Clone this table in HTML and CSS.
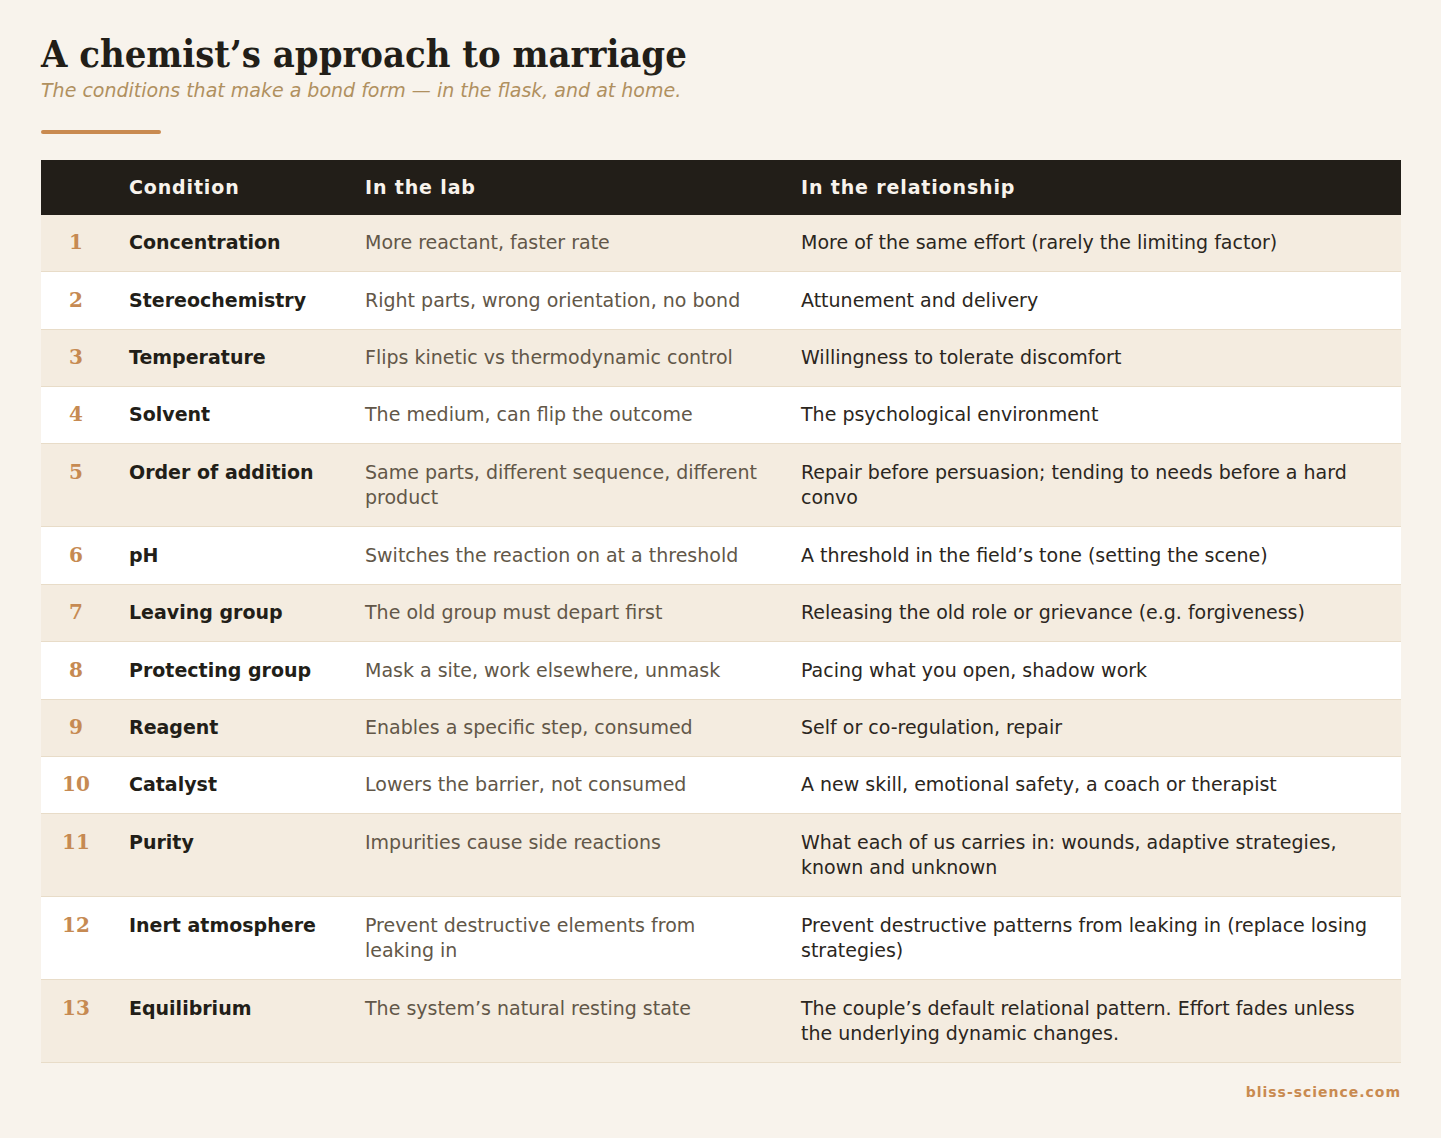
FILE: index.html
```html
<!DOCTYPE html>
<html lang="en">
<head>
<meta charset="utf-8">
<title>A chemist’s approach to marriage</title>
<link rel="stylesheet" href="styles.css">
</head>
<body>
<main class="page">
  <header class="intro">
    <h1 class="title">A chemist’s approach to marriage</h1>
    <p class="subtitle">The conditions that make a bond form — in the flask, and at home.</p>
    <div class="rule"></div>
  </header>
  <table class="grid">
    <colgroup>
      <col class="c-num"><col class="c-cond"><col class="c-lab"><col class="c-rel">
    </colgroup>
    <thead>
      <tr><th></th><th>Condition</th><th>In the lab</th><th>In the relationship</th></tr>
    </thead>
    <tbody>
      <tr><td class="num">1</td><td class="cond">Concentration</td><td class="lab">More reactant, faster rate</td><td class="rel">More of the same effort (rarely the limiting factor)</td></tr>
      <tr><td class="num">2</td><td class="cond">Stereochemistry</td><td class="lab">Right parts, wrong orientation, no bond</td><td class="rel">Attunement and delivery</td></tr>
      <tr><td class="num">3</td><td class="cond">Temperature</td><td class="lab">Flips kinetic vs thermodynamic control</td><td class="rel">Willingness to tolerate discomfort</td></tr>
      <tr><td class="num">4</td><td class="cond">Solvent</td><td class="lab">The medium, can flip the outcome</td><td class="rel">The psychological environment</td></tr>
      <tr><td class="num">5</td><td class="cond">Order of addition</td><td class="lab">Same parts, different sequence, different product</td><td class="rel">Repair before persuasion; tending to needs before a hard convo</td></tr>
      <tr><td class="num">6</td><td class="cond">pH</td><td class="lab">Switches the reaction on at a threshold</td><td class="rel">A threshold in the field’s tone (setting the scene)</td></tr>
      <tr><td class="num">7</td><td class="cond">Leaving group</td><td class="lab">The old group must depart first</td><td class="rel">Releasing the old role or grievance (e.g. forgiveness)</td></tr>
      <tr><td class="num">8</td><td class="cond">Protecting group</td><td class="lab">Mask a site, work elsewhere, unmask</td><td class="rel">Pacing what you open, shadow work</td></tr>
      <tr><td class="num">9</td><td class="cond">Reagent</td><td class="lab">Enables a specific step, consumed</td><td class="rel">Self or co-regulation, repair</td></tr>
      <tr><td class="num">10</td><td class="cond">Catalyst</td><td class="lab">Lowers the barrier, not consumed</td><td class="rel">A new skill, emotional safety, a coach or therapist</td></tr>
      <tr><td class="num">11</td><td class="cond">Purity</td><td class="lab">Impurities cause side reactions</td><td class="rel">What each of us carries in: wounds, adaptive strategies, known and unknown</td></tr>
      <tr><td class="num">12</td><td class="cond">Inert atmosphere</td><td class="lab">Prevent destructive elements from leaking in</td><td class="rel">Prevent destructive patterns from leaking in (replace losing strategies)</td></tr>
      <tr><td class="num">13</td><td class="cond">Equilibrium</td><td class="lab">The system’s natural resting state</td><td class="rel">The couple’s default relational pattern. Effort fades unless the underlying dynamic changes.</td></tr>
    </tbody>
  </table>
  <footer class="credit">bliss-science.com</footer>
</main>
</body>
</html>
```
FILE: styles.css
```css
* { box-sizing: border-box; }

html, body {
  margin: 0;
  padding: 0;
  background: #f8f3ec;
}

body {
  font-family: "DejaVu Sans", "Liberation Sans", sans-serif;
  color: #221e18;
}

.page {
  padding: 32px 40px 0 41px;
}

.intro {
  display: flex;
  flex-direction: column;
}

.title {
  margin: 0;
  font-family: "DejaVu Serif", "Liberation Serif", serif;
  font-stretch: condensed;
  font-weight: 700;
  font-size: 37.8px;
  line-height: 44px;
  color: #221e18;
}

.subtitle {
  margin: 1px 0 0;
  font-style: italic;
  font-size: 19px;
  line-height: 26px;
  color: #b0905f;
}

.rule {
  width: 120px;
  height: 4px;
  border-radius: 2px;
  background: #c98a50;
  margin-top: 27px;
}

.grid {
  margin-top: 26px;
  width: 1360px;
  border-collapse: collapse;
  table-layout: fixed;
  font-size: 19px;
  line-height: 25.6px;
}

.c-num { width: 70px; }
.c-cond { width: 236px; }
.c-lab { width: 436px; }
.c-rel { width: 618px; }

.grid th {
  background: #221e18;
  color: #f8f3ec;
  font-weight: 700;
  text-align: left;
  letter-spacing: 0.045em;
  padding: 14.7px 18px;
}

.grid td {
  vertical-align: top;
  padding: 15.4px 18px;
  border-bottom: 1px solid #e8dcc8;
}

.grid tbody tr:nth-child(odd) { background: #f4ece0; }
.grid tbody tr:nth-child(even) { background: #ffffff; }

.grid td.num {
  padding-left: 0;
  padding-right: 0;
  text-align: center;
  font-family: "DejaVu Serif", "Liberation Serif", serif;
  font-weight: 700;
  font-size: 20px;
  color: #c68a52;
}

.grid td.cond {
  font-weight: 700;
  color: #221e18;
}

.grid td.lab { color: #625748; }
.grid td.rel { color: #2b2620; }

.credit {
  margin-top: 19px;
  text-align: right;
  font-size: 14px;
  font-weight: 700;
  letter-spacing: 0.07em;
  color: #c98a50;
  line-height: 20px;
}
```
